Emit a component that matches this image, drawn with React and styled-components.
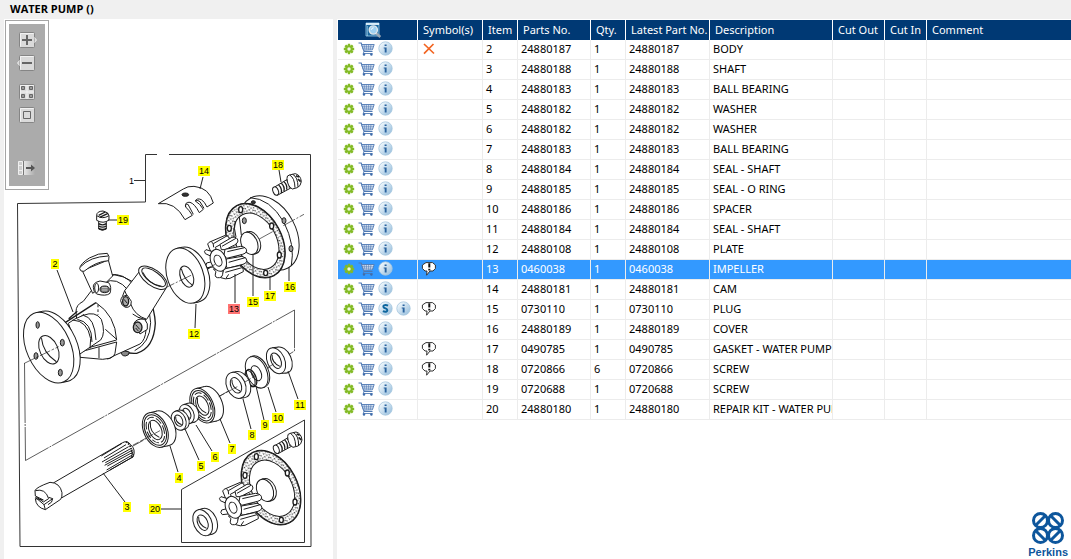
import React from 'react'
import styled, { createGlobalStyle, css } from 'styled-components'

const GlobalStyle = createGlobalStyle`
    * {
        box-sizing: border-box;
    }
    body {
        margin: 0;
        background-color: #f0f0f0;
        color: #000;
        font-family: 'Noto Sans', Tahoma, sans-serif;
        font-size: 11px;
    }
`

const Page = styled.div`
    display: flex;
    flex-direction: column;
    min-height: 100vh;
`
const Title = styled.h1`
    margin: 0;
    padding-left: 10px;
    height: 19px;
    font-family: 'Open Sans', sans-serif;
    font-size: 11px;
    font-weight: 700;
    line-height: 18px;
`
const Content = styled.main`
    display: flex;
    flex: 1;
    gap: 4px;
    padding-left: 4px;
`
const DrawingPanel = styled.section`
    position: relative;
    flex: 0 0 329px;
    background-color: #fff;
`
const Drawing = styled.svg`
    display: block;
    width: 100%;
`
const Toolbar = styled.div`
    position: absolute;
    top: 1px;
    left: 1px;
    padding: 3px;
    border: 1px solid #a5a5a5;
    background-color: #fff;
`
const ToolbarInner = styled.div`
    display: flex;
    flex-direction: column;
    align-items: center;
    width: 36px;
    padding: 8px 0 10px;
    background-color: #ababab;
`
const ToolButton = styled.button`
    display: block;
    width: 20px;
    height: 16px;
    margin: 0 0 ${({ $space }) => $space || 0}px;
    padding: 0;
    border: 0;
    background: none;

    svg {
        display: block;
        overflow: visible;
    }
`
const PartsPanel = styled.section`
    display: flex;
    flex: 1;
    flex-direction: column;
    min-width: 0;
    padding: 1px 0 0 1px;
    background-color: #fff;
`
const Table = styled.table`
    width: 100%;
    table-layout: fixed;
    border-collapse: separate;
    border-spacing: 0;
`
const HeadCell = styled.th`
    height: 20px;
    padding: 0 0 0 ${({ $icon }) => ($icon ? 27 : 5)}px;
    overflow: hidden;
    border-right: 1px solid #fff;
    background-color: #003974;
    color: #fff;
    font-weight: 400;
    line-height: 20px;
    text-align: left;
    white-space: nowrap;

    &:last-child {
        border-right: 0;
    }
    svg {
        display: block;
    }
`
const Cell = styled.td`
    height: 20px;
    padding: 0 0 2px 3px;
    overflow: hidden;
    border-right: 1px solid #ececec;
    border-bottom: 1px solid #ececec;
    line-height: 17px;
    white-space: nowrap;

    &:last-child {
        border-right: 0;
    }
    svg {
        display: block;
    }
`
const Row = styled.tr`
    ${({ $selected }) =>
        $selected &&
        css`
            background-color: #3399ff;
            color: #fff;
        `}
`
const Actions = styled.div`
    display: flex;
    align-items: center;
    gap: 3px;
    height: 17px;
    padding-left: 2px;
`
const IconButton = styled.button`
    padding: 0;
    border: 0;
    background: none;
`
const Brand = styled.div`
    display: flex;
    flex-direction: column;
    align-items: center;
    align-self: flex-end;
    margin-top: auto;
    padding-right: 3px;
    color: #0d569c;
    font-family: 'Liberation Sans', Arial, sans-serif;
    font-size: 11px;
    font-weight: 700;
    line-height: 14px;
`

const columns = [
    { name: 'Actions', width: 80 },
    { name: 'Symbol(s)', width: 65 },
    { name: 'Item', width: 35 },
    { name: 'Parts No.', width: 73 },
    { name: 'Qty.', width: 35 },
    { name: 'Latest Part No.', width: 84 },
    { name: 'Description', width: 123 },
    { name: 'Cut Out', width: 52 },
    { name: 'Cut In', width: 42 },
    { name: 'Comment' },
]

const parts = [
    { item: 2, no: '24880187', qty: 1, description: 'BODY', symbol: 'cross' },
    { item: 3, no: '24880188', qty: 1, description: 'SHAFT' },
    { item: 4, no: '24880183', qty: 1, description: 'BALL BEARING' },
    { item: 5, no: '24880182', qty: 1, description: 'WASHER' },
    { item: 6, no: '24880182', qty: 1, description: 'WASHER' },
    { item: 7, no: '24880183', qty: 1, description: 'BALL BEARING' },
    { item: 8, no: '24880184', qty: 1, description: 'SEAL - SHAFT' },
    { item: 9, no: '24880185', qty: 1, description: 'SEAL - O RING' },
    { item: 10, no: '24880186', qty: 1, description: 'SPACER' },
    { item: 11, no: '24880184', qty: 1, description: 'SEAL - SHAFT' },
    { item: 12, no: '24880108', qty: 1, description: 'PLATE' },
    { item: 13, no: '0460038', qty: 1, description: 'IMPELLER', symbol: 'note', selected: true },
    { item: 14, no: '24880181', qty: 1, description: 'CAM' },
    { item: 15, no: '0730110', qty: 1, description: 'PLUG', symbol: 'note', superseded: true },
    { item: 16, no: '24880189', qty: 1, description: 'COVER' },
    { item: 17, no: '0490785', qty: 1, description: 'GASKET - WATER PUMP', symbol: 'note' },
    { item: 18, no: '0720866', qty: 6, description: 'SCREW', symbol: 'note' },
    { item: 19, no: '0720688', qty: 1, description: 'SCREW' },
    { item: 20, no: '24880180', qty: 1, description: 'REPAIR KIT - WATER PUMP' },
]

// x, y is the centre of the label, the line runs from the label to the part
const callouts = [
    { n: 14, x: 204, y: 171, line: [203, 177, 200, 189] },
    { n: 18, x: 278, y: 165, line: [279, 170, 281, 182] },
    { n: 19, x: 123, y: 220, line: [108, 220, 118, 220] },
    { n: 2, x: 55, y: 264, line: [57, 270, 73, 312] },
    { n: 12, x: 194, y: 334, line: [195, 328, 196, 304] },
    { n: 13, x: 234, y: 309, line: [235, 303, 235, 274] },
    { n: 15, x: 253, y: 302, line: [253, 296, 253, 254] },
    { n: 17, x: 270, y: 296, line: [270, 290, 270, 278] },
    { n: 16, x: 290, y: 287, line: [289, 281, 289, 267] },
    { n: 11, x: 300, y: 405, line: [298, 399, 288, 371] },
    { n: 10, x: 278, y: 418, line: [276, 412, 268, 387] },
    { n: 9, x: 265, y: 425, line: [264, 420, 256, 386] },
    { n: 8, x: 252, y: 435, line: [251, 429, 243, 399] },
    { n: 7, x: 232, y: 449, line: [230, 443, 220, 419] },
    { n: 6, x: 215, y: 457, line: [212, 451, 196, 425] },
    { n: 5, x: 201, y: 466, line: [199, 460, 185, 429] },
    { n: 4, x: 179, y: 478, line: [178, 472, 170, 446] },
    { n: 3, x: 127, y: 507, line: [125, 502, 103, 473] },
    { n: 20, x: 155, y: 509, line: [161, 509, 181, 509] },
]

const GearIcon = () => (
    <svg width="12" height="12" viewBox="0 0 12 12">
        <g stroke="#83bb26" strokeWidth="2.4">
            <path d="M6 .8v10.4M.8 6h10.4M2.3 2.3l7.4 7.4M9.7 2.3L2.3 9.7" />
        </g>
        <circle cx="6" cy="6" r="3.7" fill="#83bb26" />
        <circle cx="6" cy="6" r="1.7" fill="#f1f8e2" />
    </svg>
)

const CartIcon = () => (
    <svg width="17" height="14" viewBox="0 0 17 14" fill="none" stroke="#4f79b3">
        <path d="M.5 1h2.7l2.9 8.500h8.400" strokeWidth="1.200" />
        <path d="M3.600 2.500h12.600l-1.800 5.300-8.800.4z" fill="#e6edf7" strokeWidth=".9" />
        <path
            d="M6 2.500l1 5.300M8.300 2.500l.4 5.300M10.600 2.500v5.300M13 2.500l-.7 5.300M4.200 4.300h11.200M4.800 6.100h10"
            strokeWidth=".6"
        />
        <path d="M6.200 9.500l-1.100 2h9.500" strokeWidth=".9" />
        <circle cx="6" cy="12.500" r="1.200" fill="#3f6cab" stroke="none" />
        <circle cx="13.400" cy="12.500" r="1.200" fill="#3f6cab" stroke="none" />
    </svg>
)

const BadgeIcon = ({ letter }) => (
    <svg width="15" height="15" viewBox="0 0 15 15">
        <defs>
            <linearGradient id={`badge-${letter}`} x1="0" y1="0" x2="1" y2="1">
                <stop offset=".2" stopColor="#e9f3fa" />
                <stop offset="1" stopColor="#8fb9da" />
            </linearGradient>
        </defs>
        <circle cx="7.5" cy="7.5" r="6.7" fill={`url(#badge-${letter})`} stroke="#a6c6de" strokeWidth=".8" />
        {letter === 'i' ? (
            <path d="M6.600 3.400h2v1.700h-2zM5.700 6.400h2.900v5H6.700V7.600h-1z" fill="#2a639f" />
        ) : (
            <path
                d="M10.1 4.7Q7.8 3.5 6.1 4.3Q4.7 5.3 5.9 6.7L8.7 8Q10 9.5 8.6 10.5Q6.9 11.2 4.9 10.2"
                fill="none"
                stroke="#0d669e"
                strokeWidth="1.9"
            />
        )}
    </svg>
)

const CrossIcon = () => (
    <svg width="16" height="14" viewBox="0 0 16 14" fill="none" stroke="#f26522" strokeWidth="1.7">
        <path d="M3 2l10 9.500M12.500 2L3 11.700" />
    </svg>
)

const NoteIcon = () => (
    <svg width="16" height="14" viewBox="0 0 16 14">
        <path
            d="M5 .6h6.500L14.400 3v3.500L12 9H9L5.600 13.200 6 9H4L1.400 6.500V3z"
            fill="#fff"
            stroke="#333"
            strokeWidth="1"
        />
        <path d="M8.300 1.200v4.400M8.300 6.800v1.600" stroke="#111" strokeWidth="2" />
    </svg>
)

const SearchListIcon = () => (
    <svg width="17" height="16" viewBox="0 0 17 16">
        <path d="M1 1h13v13H1z" fill="#19679f" stroke="#9fd0ec" strokeWidth=".8" />
        <path d="M1 2h13" stroke="#e8f7ff" strokeWidth="1.8" />
        <path d="M2.500 4.500v9" stroke="#bfe4f8" strokeWidth="1" strokeDasharray="1 1" />
        <path d="M10.800 11l4.500 4" stroke="#9ba8b5" strokeWidth="2.400" />
        <circle cx="8.300" cy="8" r="4.100" fill="#9fd1f1" stroke="#e2e8ec" strokeWidth="1.400" />
        <path d="M6.200 7.800q.4-2 2.400-2" fill="none" stroke="#fff" />
    </svg>
)

const ToolFace = ({ children }) => (
    <svg width="20" height="16" viewBox="0 0 20 16" fill="none">
        <rect x="2.500" y=".5" width="15" height="15" rx="1" fill="#dadada" stroke="#858585" />
        <path d="M3.500 14.500v-13h13" stroke="#f2f2f2" />
        {children}
    </svg>
)

// Solid disc seen at an angle, with its rim drawn towards dx, dy
const Disc = ({ cx, cy, rx, ry, tilt = 24, dx, dy, children }) => {
    const a = (-tilt * Math.PI) / 180
    const len = Math.hypot(dx, dy)
    const nx = -dy / len
    const ny = dx / len
    const ux = nx * Math.cos(a) + ny * Math.sin(a)
    const uy = -nx * Math.sin(a) + ny * Math.cos(a)
    const k = Math.hypot(rx * ux, ry * uy)
    const px = (rx * rx * ux) / k
    const py = (ry * ry * uy) / k
    const ex = px * Math.cos(a) - py * Math.sin(a)
    const ey = px * Math.sin(a) + py * Math.cos(a)
    return (
        <g>
            <ellipse cx={cx + dx} cy={cy + dy} rx={rx} ry={ry} transform={`rotate(${-tilt} ${cx + dx} ${cy + dy})`} />
            <path
                stroke="none"
                d={`M${cx + ex} ${cy + ey}l${dx} ${dy}L${cx - ex + dx} ${cy - ey + dy}l${-dx} ${-dy}z`}
            />
            <path d={`M${cx + ex} ${cy + ey}l${dx} ${dy}M${cx - ex} ${cy - ey}l${dx} ${dy}`} />
            <g transform={`translate(${cx} ${cy}) rotate(${-tilt})`}>
                <ellipse rx={rx} ry={ry} />
                {children}
            </g>
        </g>
    )
}

const Seal = props => (
    <Disc {...props}>
        <ellipse rx={props.rx * 0.55} ry={props.ry * 0.6} />
        <path
            fill="none"
            d={`M${-props.rx * 0.15} ${-props.ry * 0.5}q${-props.rx * 0.4} ${props.ry * 0.5} ${props.rx * 0.3} ${props.ry}`}
        />
    </Disc>
)

const Bearing = props => (
    <Disc {...props}>
        <ellipse rx={props.rx * 0.86} ry={props.ry * 0.88} />
        <ellipse rx={props.rx * 0.7} ry={props.ry * 0.74} strokeDasharray="22 7" />
        <ellipse rx={props.rx * 0.52} ry={props.ry * 0.56} />
        <path fill="none" d={`M-4 ${-props.ry * 0.5}q-16 ${props.ry * 0.5} 6 ${props.ry * 0.96}`} />
    </Disc>
)

const Bolt = () => (
    <g>
        <path d="M374 126L412 103L426 127L382 151z" />
        <ellipse cx="377" cy="138" rx="8" ry="13" transform="rotate(-22 377 138)" />
        <path
            fill="none"
            strokeWidth="4"
            d="M386 120q11 10 8 24M394 115q11 10 8 24M402 110q11 10 8 24M410 106q10 8 8 22"
        />
        <path d="M411 100Q410 91 419 90L436 86Q452 90 454 110Q452 124 442 128L427 132Q412 124 411 100z" />
        <path fill="none" d="M419 90Q434 98 435 128M428 88Q444 96 444 126" />
        <path strokeWidth="5" d="M444 102l8 8M438 92l9 4" />
    </g>
)

const GasketRing = () => (
    <g>
        <g transform="translate(316 287) rotate(-28)">
            <ellipse rx="79" ry="119" strokeWidth="4" />
            <ellipse rx="78" ry="118" fill="url(#grit)" />
            <ellipse cx="2" cy="3" rx="60" ry="90" />
        </g>
        <g strokeWidth="4">
            <ellipse cx="272" cy="194" rx="6" ry="9" />
            <ellipse cx="238" cy="250" rx="6" ry="9" />
            <ellipse cx="365" cy="243" rx="6" ry="9" />
            <ellipse cx="388" cy="330" rx="6" ry="9" />
            <ellipse cx="347" cy="384" rx="6" ry="8" />
        </g>
    </g>
)

const Boss = () => <Disc cx={298} cy={295} rx={24} ry={35} tilt={24} dx={8} dy={-2} />

const Impeller = () => (
    <g>
        <path d="M186 330L173 297Q176 291 184 289L226 271Q238 272 239 284L196 307L204 325z" />
        <path d="M214 314L210 298L246 277Q262 274 264 288Q263 295 254 300L226 314z" />
        <path d="M222 330L225 313L272 304Q290 306 290 318Q288 326 278 328L230 340z" />
        <path d="M226 356L229 342L276 334Q292 338 291 348Q288 356 279 358L232 370z" />
        <path d="M212 398L222 372L268 362Q281 366 280 380L240 400Q226 404 212 398z" />
        <path d="M190 372L198 380Q192 396 202 398Q216 400 218 388L220 372z" />
        <path d="M186 350L170 354Q164 362 172 368L190 366z" />
        <path d="M184 334L166 326Q160 318 168 314L188 320z" />
        <path
            fill="none"
            d="M184 289Q192 296 191 307M232 272L190 296M258 280L216 304M284 308L232 320M286 338L236 352M276 368L226 382M236 388L228 400"
        />
        <ellipse cx="205" cy="346" rx="23" ry="34" transform="rotate(-20 205 346)" />
        <ellipse cx="204" cy="347" rx="11" ry="17" transform="rotate(-20 204 347)" />
    </g>
)

const PumpBody = () => (
    <g>
        <path d="M405 120Q462 170 466 250Q462 325 410 340Q390 342 372 334Z" strokeWidth="4" />
        <path d="M398 130Q450 180 452 248Q450 310 404 332" fill="none" />
        <path d="M362 330q0 18 14 18q12-1 12-12z" fill="#888" />
        <path d="M228 215Q228 194 250 184L300 118Q340 88 398 125Q440 180 438 270Q436 300 420 312L345 346Q330 358 308 358L240 352z" />
        <path d="M312 128Q350 108 386 152M330 104Q370 98 402 136" fill="none" />
        <path d="M247 92L278 160Q310 140 338 108L325 60z" />
        <path d="M239 86Q240 72 268 54Q296 38 322 40Q330 48 326 62Q288 64 252 94Q241 96 239 86z" />
        <path d="M242 80Q270 50 325 48" fill="none" />
        <path d="M418 95L374 152L392 192Q404 226 440 238L498 145z" />
        <path d="M374 152Q362 172 368 190" fill="none" />
        <g transform="translate(459 113) rotate(36)">
            <ellipse rx="50" ry="24" />
            <ellipse cx="1" cy="-2" rx="42" ry="17" />
            <path d="M-34 5Q0 24 36 6" fill="none" />
        </g>
        <path d="M398 222l20 12M416 232l22 8" fill="none" />
        <path d="M280 142Q278 128 300 123L326 128Q336 140 330 160Q318 170 290 162Q280 156 280 142z" />
        <ellipse cx="314" cy="148" rx="14" ry="10" fill="#777" />
        <path d="M306 143h16M306 150h16" stroke="#fff" strokeWidth="2" />
        <ellipse cx="290" cy="144" rx="6" ry="14" />
        <path d="M362 182Q364 166 382 166L394 184Q394 204 376 202Q364 198 362 182z" />
        <ellipse cx="377" cy="184" rx="9" ry="14" fill="#aaa" strokeWidth="4" />
        <path d="M402 250Q410 234 434 238Q446 250 442 268L420 282z" />
        <ellipse cx="413" cy="262" rx="13" ry="16" fill="#aaa" strokeWidth="4" />
        <path d="M372 178l10 12M407 254l12 14M407 264l8 9" fill="none" />
        <path d="M192 250L288 188M206 236L232 214M200 262L252 224" strokeWidth="4" fill="none" />
        <path d="M288 188Q346 226 350 300L270 322M240 336L350 306L345 340Q340 354 322 357M297 322V354M316 268L350 298" fill="none" />
        <path d="M294 194V224" strokeDasharray="8 6" />
        <path d="M205 250Q222 236 250 226Q286 212 304 238Q318 280 302 300L240 342z" />
        <path d="M218 240Q262 242 272 296L270 326M232 238Q276 246 276 306M250 226Q284 232 288 300" fill="none" />
        <Disc cx={146} cy={323} rx={66} ry={112} tilt={24} dx={19} dy={-4}>
            <ellipse cx="-2" cy="6" rx="27" ry="45" />
            <path d="M-8 -35Q-22 6 4 48" fill="none" />
        </Disc>
        <g fill="#999">
            <ellipse cx="113" cy="255" rx="5" ry="10" />
            <ellipse cx="187" cy="308" rx="6" ry="10" />
            <ellipse cx="108" cy="348" rx="6" ry="10" />
            <ellipse cx="181" cy="398" rx="6" ry="10" />
        </g>
        <path d="M73 370L176 320" strokeWidth="2" strokeDasharray="34 5 8 5" />
    </g>
)

const Shaft = () => (
    <g>
        <path d="M160 219L368 98Q382 90 392 104Q408 118 400 140L186 263z" />
        <path
            fill="none"
            d="M304 138L366 100M312 144L378 104M306 156L386 110M316 158L392 116M314 166L398 120M322 168L400 126M320 180L402 132M330 180L400 140"
        />
        <path d="M378 95Q398 108 396 142" fill="none" strokeDasharray="5 3" strokeWidth="5" />
        <path d="M105 242Q108 232 150 217Q180 218 186 248Q187 262 182 268L136 299Q108 292 106 266L130 270L106 258z" />
        <path
            fill="none"
            d="M106 242Q136 234 146 266L130 276L108 260M106 262L132 284L158 266L146 262M132 284L136 299M158 266Q158 278 144 284"
        />
    </g>
)

const PlugScrew = () => (
    <g>
        <path d="M296 226V252Q307 260 319 252V226z" />
        <path d="M296 236q12 7 23 0M296 243q12 7 23 0M296 250q12 7 23 0" fill="none" strokeWidth="4" />
        <path d="M290 211Q290 199 309 198Q327 202 327 212V225Q310 238 290 226z" />
        <path d="M290 212Q308 224 327 212" fill="none" />
        <path d="M299 217L324 205M296 211L316 201" strokeWidth="4" />
    </g>
)

const Callout = ({ n, x, y, line: [x1, y1, x2, y2] }) => {
    const width = n > 9 ? 12 : 8
    return (
        <g>
            <path d={`M${x1} ${y1}L${x2} ${y2}`} stroke="#222" />
            <rect x={x - width / 2} y={y - 5} width={width} height="10" fill={n === 13 ? '#ff7373' : '#ffff00'} />
            <text x={x} y={y + 3} textAnchor="middle">
                {n}
            </text>
        </g>
    )
}

const PumpDrawing = () => (
    <Drawing
        viewBox="4 19 329 540"
        fontFamily="'Liberation Sans', Arial, sans-serif"
        fontSize="9"
        role="img"
        aria-label="Exploded view of the water pump"
    >
        <defs>
            <pattern id="grit" width="23" height="19" patternUnits="userSpaceOnUse">
                <rect width="23" height="19" fill="#fff" />
                <path
                    d="M2 3l4 3M11 1l1 4M17 6l4-2M4 12l2 4M12 10l4 3M20 14l-3 3M9 16h1"
                    stroke="#333"
                    strokeWidth="3"
                />
            </pattern>
        </defs>

        <g fill="none" stroke="#333">
            <path d="M145.500 202V154.500H157M169 154.500H310.500L311 546.500H20L17.500 203.500L145.500 202" />
            <path d="M181.500 489.500L304.500 420V542.500H181.500z" />
            <path d="M134 180.500h11" />
            <path d="M24.500 363L25.500 460.500L294.500 310V351L288 355" strokeWidth=".8" strokeDasharray="60 1 2 1" />
            <path d="M133 446L160 431M218 397L284 359" strokeWidth=".8" strokeDasharray="12 2" />
        </g>
        <text x="129" y="184">
            1
        </text>

        <g fill="#fff" stroke="#1c1c1c" strokeWidth="3" strokeLinejoin="round">
            <g transform="translate(0 145) scale(.3333)">
                <PlugScrew />
            </g>
            <g transform="translate(150 145) scale(.3333)">
                <path d="M25 176Q75 168 105 224L127 211Q118 196 107 186Q104 170 120 172Q134 176 148 203L160 193Q150 176 136 168Q140 158 154 164Q164 170 171 186L190 174Q178 128 132 124Q112 123 100 132z" />
                <path d="M107 186Q104 176 114 178L130 208M136 168Q144 164 150 170L162 190" fill="none" />
                <ellipse cx="106" cy="149" rx="10" ry="5" fill="#333" />
                <Bolt />
                <g transform="translate(358 264) rotate(-28)">
                    <ellipse rx="79" ry="119" />
                </g>
                <path d="M300 158Q360 160 402 232Q436 300 424 362" fill="none" />
                <ellipse cx="402" cy="227" rx="6" ry="9" fill="#999" />
                <ellipse cx="423" cy="311" rx="6" ry="9" fill="#999" />
                <ellipse cx="310" cy="172" rx="6" ry="5" fill="#333" />
                <path d="M400 242L462 208" strokeWidth="2" strokeDasharray="40 5 6 5" />
                <GasketRing />
                <path d="M268 216L274 270M256 228Q250 250 258 276" fill="none" />
                <ellipse cx="283" cy="227" rx="6" ry="9" fill="#999" />
                <path d="M328 282L368 260" strokeWidth="2" />
                <Boss />
                <path d="M168 362l18-12 6 10-18 12z" fill="#444" />
                <Impeller />
                <Disc cx={106} cy={392} rx={54} ry={86} tilt={20} dx={15} dy={-3}>
                    <ellipse cx="3" cy="4" rx="19" ry="33" />
                    <path d="M-4 -24Q-8 8 10 34" fill="none" />
                </Disc>
                <path d="M37 433L125 390M176 368L196 358" strokeWidth="2" strokeDasharray="40 5 6 5" />
            </g>
            <g transform="translate(0 240) scale(.3333)">
                <PumpBody />
            </g>
            <g transform="translate(130 310) scale(.3333)">
                <Seal cx={438} cy={152} rx={26} ry={41} dx={20} dy={-2} />
                <Disc cx={380} cy={187} rx={30} ry={50} dx={5} dy={-2}>
                    <ellipse cx="-2" cy="2" rx="14" ry="24" />
                </Disc>
                <ellipse cx="364" cy="204" rx="14" ry="27" transform="rotate(-22 364 204)" fill="none" strokeWidth="4" />
                <ellipse cx="360" cy="206" rx="13" ry="26" transform="rotate(-22 360 206)" fill="none" />
                <Seal cx={318} cy={226} rx={28} ry={41} dx={14} dy={-2} />
                <Bearing cx={217} cy={287} rx={33} ry={55} dx={26} dy={-6} />
                <Seal cx={170} cy={312} rx={21} ry={30} dx={14} dy={-4} />
                <Seal cx={146} cy={332} rx={21} ry={30} dx={9} dy={-3} />
                <Bearing cx={76} cy={360} rx={35} ry={55} dx={23} dy={-5} />
                <path
                    d="M8 406L90 362M266 260L322 230M414 172L438 158M345 216L378 196"
                    strokeWidth="2"
                    strokeDasharray="20 5"
                />
            </g>
            <g transform="translate(0 410) scale(.3333)">
                <Shaft />
            </g>
            <g transform="translate(150 410) scale(.3333)">
                <g transform="translate(2 -20)">
                    <Bolt />
                </g>
                <g transform="translate(47 -54)">
                    <GasketRing />
                    <Boss />
                </g>
                <g transform="translate(45 -54)">
                    <Impeller />
                </g>
                <Seal cx={158} cy={338} rx={27} ry={41} dx={15} dy={-4} />
            </g>
        </g>

        {callouts.map(callout => (
            <Callout key={callout.n} {...callout} />
        ))}
    </Drawing>
)

const PerkinsMark = () => (
    <svg width="34" height="34" viewBox="0 0 34 34" fill="none" stroke="#0d569c" strokeWidth="3">
        <circle cx="9.500" cy="9.500" r="7" />
        <circle cx="24.500" cy="9.500" r="7" />
        <circle cx="9.500" cy="24.500" r="7" />
        <circle cx="24.500" cy="24.500" r="7" />
        <path d="M5 14l9-9M20 5l9 9M5 20l9 9M20 29l9-9" />
    </svg>
)

const Tools = () => (
    <Toolbar>
        <ToolbarInner>
            <ToolButton type="button" aria-label="Zoom in" $space={7}>
                <ToolFace>
                    <path d="M17.500 5.500l2 2.500-2 2.500" fill="#dadada" stroke="#e8e8e8" />
                    <path d="M5 8h10M10 3v10" stroke="#666" strokeWidth="2" />
                </ToolFace>
            </ToolButton>
            <ToolButton type="button" aria-label="Zoom out" $space={13}>
                <ToolFace>
                    <path d="M2.500 5.500l-2 2.500 2 2.500" fill="#dadada" stroke="#e8e8e8" />
                    <path d="M5 8h10" stroke="#666" strokeWidth="2" />
                </ToolFace>
            </ToolButton>
            <ToolButton type="button" aria-label="Fit to window" $space={7}>
                <ToolFace>
                    <path
                        d="M4.500 2.500h3v3h-3zM12.500 2.500h3v3h-3zM4.500 10.500h3v3h-3zM12.500 10.500h3v3h-3z"
                        fill="#999"
                        stroke="#666"
                    />
                    <path d="M3 8h14M10 1v14" stroke="#f2f2f2" />
                </ToolFace>
            </ToolButton>
            <ToolButton type="button" aria-label="Actual size" $space={37}>
                <ToolFace>
                    <path d="M6.500 4.500h7v7h-7z" stroke="#666" />
                </ToolFace>
            </ToolButton>
            <ToolButton type="button" aria-label="Hide list">
                <svg width="20" height="16" viewBox="0 0 20 16" fill="none">
                    <defs>
                        <linearGradient id="fade">
                            <stop offset="0" stopColor="#e6e6e6" />
                            <stop offset="1" stopColor="#ababab" />
                        </linearGradient>
                    </defs>
                    <path d="M7 1h11v14H7z" fill="url(#fade)" />
                    <path d="M1.500 1.500h4v13h-4zM1.500 5.500h4M1.500 10.500h4" fill="#ccc" stroke="#efefef" />
                    <path d="M6.500 1v14" stroke="#777" />
                    <path d="M9 8h6" stroke="#555" strokeWidth="2" />
                    <path d="M14 4.500L18 8l-4 3.500z" fill="#555" />
                </svg>
            </ToolButton>
        </ToolbarInner>
    </Toolbar>
)

const PartRow = ({ item, no, qty, description, symbol, superseded, selected }) => (
    <Row $selected={selected} aria-selected={selected}>
        <Cell>
            <Actions>
                <IconButton type="button" aria-label="Options">
                    <GearIcon />
                </IconButton>
                <IconButton type="button" aria-label="Add to cart">
                    <CartIcon />
                </IconButton>
                {superseded && (
                    <IconButton type="button" aria-label="Supersession">
                        <BadgeIcon letter="S" />
                    </IconButton>
                )}
                <IconButton type="button" aria-label="Information">
                    <BadgeIcon letter="i" />
                </IconButton>
            </Actions>
        </Cell>
        <Cell>
            {symbol === 'cross' && <CrossIcon />}
            {symbol === 'note' && <NoteIcon />}
        </Cell>
        <Cell>{item}</Cell>
        <Cell>{no}</Cell>
        <Cell>{qty}</Cell>
        <Cell>{no}</Cell>
        <Cell>{description}</Cell>
        <Cell />
        <Cell />
        <Cell />
    </Row>
)

const App = () => (
    <Page>
        <GlobalStyle />
        <Title>WATER PUMP ()</Title>
        <Content>
            <DrawingPanel>
                <PumpDrawing />
                <Tools />
            </DrawingPanel>
            <PartsPanel>
                <Table>
                    <colgroup>
                        {columns.map(({ name, width }) => (
                            <col key={name} width={width} />
                        ))}
                    </colgroup>
                    <thead>
                        <tr>
                            {columns.map(({ name }, index) => (
                                <HeadCell key={name} scope="col" $icon={index === 0}>
                                    {index === 0 ? <SearchListIcon /> : name}
                                </HeadCell>
                            ))}
                        </tr>
                    </thead>
                    <tbody>
                        {parts.map(part => (
                            <PartRow key={part.item} {...part} />
                        ))}
                    </tbody>
                </Table>
                <Brand>
                    <PerkinsMark />
                    Perkins
                </Brand>
            </PartsPanel>
        </Content>
    </Page>
)

export default App
